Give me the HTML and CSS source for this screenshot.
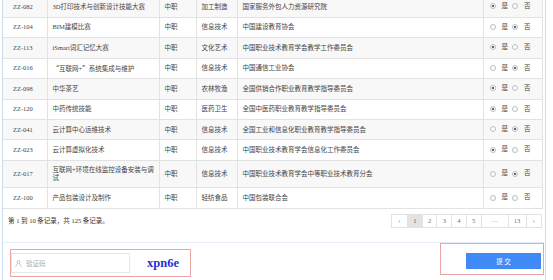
FILE: index.html
```html
<!doctype html>
<html lang="zh-CN">
<head>
    <meta charset="UTF-8">
    <title>项目申报</title>
    <link rel="stylesheet" href="styles.css">
</head>
<body>
<div class="panel">
    <table class="grid">
        <colgroup>
            <col class="c-code">
            <col class="c-name">
            <col class="c-level">
            <col class="c-type">
            <col class="c-org">
            <col class="c-pick">
        </colgroup>
        <tbody>
        <tr>
            <td class="code">ZZ-082</td><td class="name">3D打印技术与创新设计技能大赛</td><td>中职</td><td>加工制造</td><td>国家服务外包人力资源研究院</td>
            <td class="pick"><label><input type="radio" name="r1" checked>是</label><label><input type="radio" name="r1">否</label></td>
        </tr>
        <tr>
            <td class="code">ZZ-104</td><td class="name">BIM建模比赛</td><td>中职</td><td>信息技术</td><td>中国建设教育协会</td>
            <td class="pick"><label><input type="radio" name="r2">是</label><label><input type="radio" name="r2" checked>否</label></td>
        </tr>
        <tr>
            <td class="code">ZZ-113</td><td class="name">iSmart词汇记忆大赛</td><td>中职</td><td>文化艺术</td><td>中国职业技术教育学会教学工作委员会</td>
            <td class="pick"><label><input type="radio" name="r3" checked>是</label><label><input type="radio" name="r3">否</label></td>
        </tr>
        <tr>
            <td class="code">ZZ-016</td><td class="name"><span class="q">“</span>互联网+<span class="q">”</span>系统集成与维护</td><td>中职</td><td>信息技术</td><td>中国通信工业协会</td>
            <td class="pick"><label><input type="radio" name="r4">是</label><label><input type="radio" name="r4" checked>否</label></td>
        </tr>
        <tr>
            <td class="code">ZZ-098</td><td class="name">中华茶艺</td><td>中职</td><td>农林牧渔</td><td>全国供销合作职业教育教学指导委员会</td>
            <td class="pick"><label><input type="radio" name="r5" checked>是</label><label><input type="radio" name="r5">否</label></td>
        </tr>
        <tr>
            <td class="code">ZZ-120</td><td class="name">中药传统技能</td><td>中职</td><td>医药卫生</td><td>全国中医药职业教育教学指导委员会</td>
            <td class="pick"><label><input type="radio" name="r6" checked>是</label><label><input type="radio" name="r6">否</label></td>
        </tr>
        <tr>
            <td class="code">ZZ-041</td><td class="name">云计算中心运维技术</td><td>中职</td><td>信息技术</td><td>全国工业和信息化职业教育教学指导委员会</td>
            <td class="pick"><label><input type="radio" name="r7">是</label><label><input type="radio" name="r7" checked>否</label></td>
        </tr>
        <tr>
            <td class="code">ZZ-023</td><td class="name">云计算虚拟化技术</td><td>中职</td><td>信息技术</td><td>中国职业技术教育学会信息化工作委员会</td>
            <td class="pick"><label><input type="radio" name="r8" checked>是</label><label><input type="radio" name="r8">否</label></td>
        </tr>
        <tr>
            <td class="code">ZZ-017</td><td class="name">互联网+环境在线监控设备安装与调试</td><td>中职</td><td>信息技术</td><td>中国职业技术教育学会中等职业技术教育分会</td>
            <td class="pick"><label><input type="radio" name="r9">是</label><label><input type="radio" name="r9" checked>否</label></td>
        </tr>
        <tr>
            <td class="code">ZZ-100</td><td class="name">产品包装设计及制作</td><td>中职</td><td>轻纺食品</td><td>中国包装联合会</td>
            <td class="pick"><label><input type="radio" name="r10">是</label><label><input type="radio" name="r10">否</label></td>
        </tr>
        </tbody>
    </table>

    <div class="pager-row">
        <span class="total">第 1 到 10 条记录，共 125 条记录。</span>
        <ul class="pager">
            <li class="arrow">&lsaquo;</li>
            <li class="current">1</li>
            <li>2</li>
            <li>3</li>
            <li>4</li>
            <li>5</li>
            <li class="gap">…</li>
            <li class="last">13</li>
            <li class="arrow">&rsaquo;</li>
        </ul>
    </div>

    <form class="form-row" onsubmit="return false">
        <div class="captcha">
            <label class="captcha-input">
                <svg width="7" height="7" viewBox="0 0 7 7">
                    <circle cx="3.5" cy="2" r="1.5" fill="none" stroke="#b8b8b8" stroke-width="0.8"/>
                    <path d="M0.6 6.8 L2.6 3.4 M6.4 6.8 L4.4 3.4" fill="none" stroke="#b8b8b8" stroke-width="0.8"/>
                </svg>
                <input type="text" placeholder="验证码">
            </label>
            <span class="code-img">xpn6e</span>
        </div>
        <div class="submit">
            <button type="submit">提 交</button>
        </div>
    </form>
</div>
</body>
</html>
```
FILE: styles.css
```css
* {
    padding: 0;
    margin: 0;
    list-style: none;
    box-sizing: border-box;
}

body {
    font-family: "Liberation Serif", "Noto Sans CJK SC", serif;
    font-size: 6.5px;
    color: #444;
    background: #fff;
}

.panel {
    width: 544px;
    margin: -3.7px 0 0 2px;
    border: 1px solid #c9dcef;
    border-top: 0;
}

.grid {
    width: 539px;
    border-collapse: collapse;
    table-layout: fixed;
}

.c-code { width: 44px; }
.c-name { width: 112px; }
.c-level { width: 37px; }
.c-type { width: 41px; }
.c-org { width: 246px; }
.c-pick { width: 59px; }

.grid td {
    border: 1px solid #e2e2e2;
    padding: 5px 5px;
    line-height: 8.3px;
    vertical-align: middle;
}

.grid td:first-child {
    border-left: 0;
}

.grid tr:nth-child(odd) td {
    background: #f8f8f8;
}

.grid td.code {
    padding-left: 10px;
}

.grid td.name {
    padding-right: 2px;
}

.q {
    font-family: "Noto Sans CJK SC", sans-serif;
}

.pick label {
    display: inline-flex;
    align-items: center;
    margin-right: 3px;
}

.pick input {
    appearance: none;
    -webkit-appearance: none;
    width: 6px;
    height: 6px;
    border: 1px solid #bdbdbd;
    border-radius: 50%;
    margin: 0 6px 0 1px;
    background: #fff;
}

.pick input:checked {
    background: radial-gradient(circle, #666 0, #666 1.2px, #fff 1.6px);
}

.pager-row {
    height: 34.5px;
    padding: 5px 3px 0 5px;
    display: flex;
    justify-content: space-between;
    align-items: flex-start;
    border-bottom: 1px solid #e6eef7;
}

.total {
    line-height: 12px;
    margin-top: 1px;
    color: #333;
}

.pager {
    display: flex;
    border: 1px solid #e2e2e2;
    height: 14.5px;
}

.pager li {
    width: 14.7px;
    text-align: center;
    line-height: 12.5px;
    color: #5b7796;
    border-left: 1px solid #e2e2e2;
}

.pager li:first-child {
    border-left: 0;
}

.pager .arrow {
    width: 15.5px;
    color: #aaa;
    font-size: 8px;
}

.pager .current {
    background: #e3e3e3;
    color: #555;
}

.pager .gap {
    width: 27px;
    font-family: "Noto Sans CJK SC", sans-serif;
    color: #888;
}

.pager .last {
    width: 18px;
}

.form-row {
    height: 37px;
    display: flex;
    justify-content: space-between;
    align-items: flex-start;
}

.captcha {
    width: 181px;
    height: 28px;
    margin: 6px 0 0 7px;
    border: 1px solid #eba4a4;
    padding-top: 3px;
    display: flex;
    align-items: center;
    align-self: flex-start;
}

.captcha-input {
    width: 119px;
    height: 19.5px;
    border: 1px solid #e6e6e6;
    display: flex;
    align-items: center;
    padding-left: 3px;
    align-self: flex-start;
}

.captcha-input svg {
    margin-right: 4px;
}

.captcha-input input {
    border: 0;
    outline: 0;
    width: 90px;
    font-family: "Noto Sans CJK SC", sans-serif;
    font-size: 6.5px;
    color: #333;
    background: transparent;
}

.captcha-input input::placeholder {
    color: #aaa;
}

.code-img {
    margin-left: 17px;
    font-family: "Liberation Serif", serif;
    font-weight: bold;
    font-size: 12.5px;
    color: #2430cf;
    margin-top: -3px;
}

.submit {
    width: 104px;
    height: 32px;
    margin-right: 1px;
    border: 1px solid #eba4a4;
    padding: 9px 2px 0 0;
    display: flex;
    justify-content: flex-end;
    align-items: flex-start;
}

.submit button {
    width: 75px;
    height: 16px;
    border: 0;
    background: #4189f4;
    color: #fff;
    font-family: "Noto Sans CJK SC", sans-serif;
    font-size: 6.5px;
    cursor: pointer;
}
```
